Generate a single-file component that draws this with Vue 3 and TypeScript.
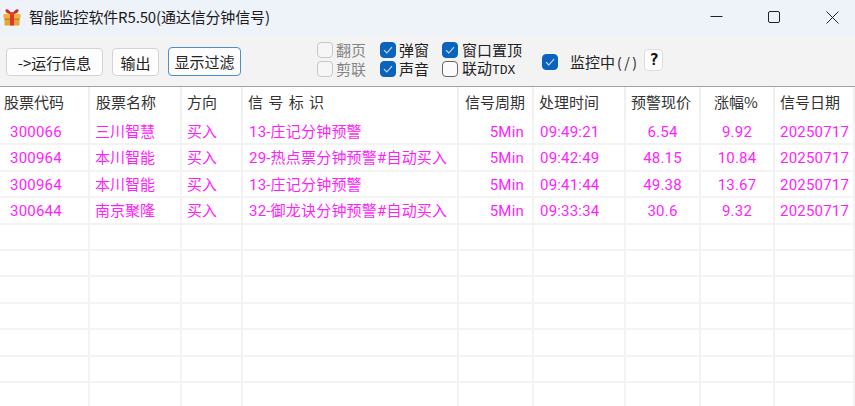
<script setup lang="ts">
const columns = [
  { label: '股票代码', cls: 'h-code' },
  { label: '股票名称', cls: 'h-name' },
  { label: '方向', cls: 'h-dir' },
  { label: '信 号 标 识', cls: 'h-signal' },
  { label: '信号周期', cls: 'h-name' },
  { label: '处理时间', cls: 'h-tight' },
  { label: '预警现价', cls: 'h-tight' },
  { label: '涨幅%', cls: 'h-pct' },
  { label: '信号日期', cls: 'h-tight' },
]
const signals = [
  ['300066', '三川智慧', '买入', '13-庄记分钟预警', '5Min', '09:49:21', '6.54', '9.92', '20250717'],
  ['300964', '本川智能', '买入', '29-热点票分钟预警#自动买入', '5Min', '09:42:49', '48.15', '10.84', '20250717'],
  ['300964', '本川智能', '买入', '13-庄记分钟预警', '5Min', '09:41:44', '49.38', '13.67', '20250717'],
  ['300644', '南京聚隆', '买入', '32-御龙诀分钟预警#自动买入', '5Min', '09:33:34', '30.6', '9.32', '20250717'],
]
const cellClass = ['c-code', 'c-name', 'c-dir', 'c-sig', 'c-right', 'c-time', 'c-center', 'c-center', 'c-date']
const rows: string[][] = [...signals, ...Array.from({ length: 7 }, () => Array(9).fill(''))]
</script>

<template>
  <div class="window">
    <div class="titlebar">
      <svg class="logo" width="18" height="18" viewBox="0 0 18 18">
        <rect x="0.5" y="6" width="17" height="4.5" rx="0.8" fill="#f2b23a" />
        <rect x="1.5" y="10.5" width="15" height="7" fill="#e9a533" />
        <rect x="1.5" y="10.5" width="15" height="1.2" fill="#b9782a" />
        <rect x="7" y="6" width="4" height="11.5" fill="#d63a2f" />
        <path d="M9 6 C6 0.5 2 0 2.5 3 C3 5.5 6.5 6 9 6 C11.5 6 15 5.5 15.5 3 C16 0 12 0.5 9 6Z" fill="#c9302a" />
        <rect x="7.5" y="4" width="3" height="3" fill="#e4483a" />
      </svg>
      <span class="title">智能监控软件R5.50(通达信分钟信号)</span>
      <div class="winctl">
        <svg width="13" height="13" viewBox="0 0 13 13"><path d="M0.5 5.5H12.5" stroke="#222" stroke-width="1" /></svg>
        <svg width="13" height="13" viewBox="0 0 13 13"><rect x="0.5" y="0.5" width="11" height="11" rx="1.5" fill="none" stroke="#222" stroke-width="1" /></svg>
        <svg width="13" height="13" viewBox="0 0 13 13"><path d="M0.5 0.5L12.5 12.5M12.5 0.5L0.5 12.5" stroke="#222" stroke-width="1" /></svg>
      </div>
    </div>

    <div class="toolbar">
      <button class="btn b-run">-&gt;运行信息</button>
      <button class="btn b-out">输出</button>
      <button class="btn b-filter">显示过滤</button>

      <div class="checks c1">
        <label class="chk disabled"><i class="box"></i>翻页</label>
        <label class="chk disabled"><i class="box"></i>剪联</label>
      </div>
      <div class="checks c2">
        <label class="chk"><i class="box on"><svg width="16" height="16" viewBox="0 0 16 16"><path d="M4 8.2L6.8 11L12 5.2" fill="none" stroke="#cfe2f5" stroke-width="1.1" /></svg></i>弹窗</label>
        <label class="chk"><i class="box on"><svg width="16" height="16" viewBox="0 0 16 16"><path d="M4 8.2L6.8 11L12 5.2" fill="none" stroke="#cfe2f5" stroke-width="1.1" /></svg></i>声音</label>
      </div>
      <div class="checks c3">
        <label class="chk"><i class="box on"><svg width="16" height="16" viewBox="0 0 16 16"><path d="M4 8.2L6.8 11L12 5.2" fill="none" stroke="#cfe2f5" stroke-width="1.1" /></svg></i>窗口置顶</label>
        <label class="chk"><i class="box dark"></i><span>联动<span class="mono">TDX</span></span></label>
      </div>
      <label class="chk monitor"><i class="box on"><svg width="16" height="16" viewBox="0 0 16 16"><path d="M4 8.2L6.8 11L12 5.2" fill="none" stroke="#cfe2f5" stroke-width="1.1" /></svg></i><span class="mon-text">监控中<span class="mon-key">(/)</span></span></label>
      <button class="help">?</button>
    </div>

    <div class="table">
      <div class="row head">
        <div v-for="c in columns" :key="c.label" class="cell" :class="c.cls">{{ c.label }}</div>
      </div>
      <div v-for="(r, i) in rows" :key="i" class="row body">
        <div v-for="(v, j) in r" :key="j" class="cell" :class="cellClass[j]">{{ v }}</div>
      </div>
    </div>
  </div>
</template>

<style>
html, body { margin: 0; background: #fff; overflow: hidden; }
</style>

<style scoped>
.window {
  width: 855px;
  height: 406px;
  overflow: hidden;
  font-family: "Noto Sans CJK SC", "Liberation Sans", sans-serif;
  color: #222;
  background: #fff;
}
.titlebar {
  height: 36px;
  box-sizing: border-box;
  background: #eef2f9;
  display: flex;
  align-items: center;
  padding: 0 0 3px 3px;
}
.logo { margin-right: 8px; }
.title { font-size: 15px; color: #1a1a1a; letter-spacing: -0.15px; }
.winctl {
  margin-left: auto;
  display: flex;
  gap: 45px;
  padding-right: 16px;
  padding-top: 2px;
  align-items: center;
}
.toolbar {
  height: 51px;
  box-sizing: border-box;
  background: #f3f3f3;
  border-bottom: 1px solid #a0a4a8;
  display: flex;
  align-items: flex-start;
}
.btn {
  height: 28px;
  margin-top: 12px;
  padding: 0;
  box-sizing: border-box;
  background: #fdfdfd;
  border: 1px solid #d4d4d4;
  border-radius: 4px;
  font: 15px/1 "Noto Sans CJK SC", sans-serif;
  color: #222;
}
.b-run { width: 97px; margin-left: 6px; }
.b-out { width: 47px; margin-left: 9px; }
.b-filter { width: 73px; margin-left: 9px; height: 29px; margin-top: 11px; border: 1.5px solid #4a90d0; }
.checks {
  display: flex;
  flex-direction: column;
  gap: 3px;
  margin-top: 6px;
}
.c1 { margin-left: 76px; width: 63px; }
.c2 { width: 62px; }
.c3 { width: 100px; }
.c3 .chk { gap: 4px; }
.chk {
  display: flex;
  align-items: center;
  gap: 3px;
  font-size: 15px;
  line-height: 16px;
  height: 16px;
  white-space: nowrap;
  color: #222;
}
.chk.disabled { color: #858585; }
.box {
  width: 16px;
  height: 16px;
  flex: none;
  box-sizing: border-box;
  border: 1px solid #c8c8c8;
  border-radius: 4px;
  background: #f6f6f6;
  display: block;
  overflow: hidden;
}
.box svg { display: block; margin: -1px; }
.box.on { background: #0a63bd; border-color: #0a63bd; }
.box.dark { border-color: #666; background: #fbfbfb; }
.mono { font-family: "Liberation Mono", monospace; font-size: 13px; }
.monitor { margin-top: 18px; }
.mon-text { margin-left: 9px; }
.mon-key { font-size: 14px; letter-spacing: 2.5px; margin-left: 2px; }
.help {
  width: 19px;
  height: 22px;
  margin-left: 5px;
  margin-top: 13px;
  padding: 0;
  border: 1px solid #ddd;
  border-radius: 4px;
  background: #fdfdfd;
  font: bold 16px/1 "DejaVu Sans Mono", monospace;
  color: #111;
}
.table { width: 855px; }
.row {
  display: grid;
  grid-template-columns: 90px 92px 61px 216px 75px 92px 75px 74px 80px;
  box-sizing: border-box;
  border-bottom: 2px solid #f3f3f3;
}
.head { height: 32px; border-bottom: none; color: #333; }
.body { height: 26.4px; color: #ff1eff; }
.head .cell { font-size: 15px; line-height: 30px; border-right: 2px solid #f0f0f0; }
.cell {
  box-sizing: border-box;
  border-right: 2px solid #f3f3f3;
  line-height: 24px;
  white-space: nowrap;
  overflow: hidden;
}
.body .cell { font-family: Roboto, "Noto Sans CJK SC", sans-serif; font-size: 15px; padding-top: 1px; }
.h-code { padding-left: 4px; }
.h-name { padding-left: 6px; }
.h-tight { padding-left: 5px; }
.h-dir { padding-left: 5px; }
.h-pct { padding-left: 13px; }
.h-signal { padding-left: 5px; letter-spacing: 1px; }
.c-code { padding-left: 10px; letter-spacing: 0.2px; }
.c-name { padding-left: 5px; }
.c-dir { padding-left: 5px; }
.c-sig { padding-left: 6px; letter-spacing: 0.2px; }
.c-right { text-align: right; padding-right: 8px; letter-spacing: 0.2px; }
.c-center { text-align: center; letter-spacing: 0.2px; }
.c-time { padding-left: 6px; letter-spacing: 0.2px; }
.c-date { padding-left: 5px; letter-spacing: 0.2px; }
</style>
